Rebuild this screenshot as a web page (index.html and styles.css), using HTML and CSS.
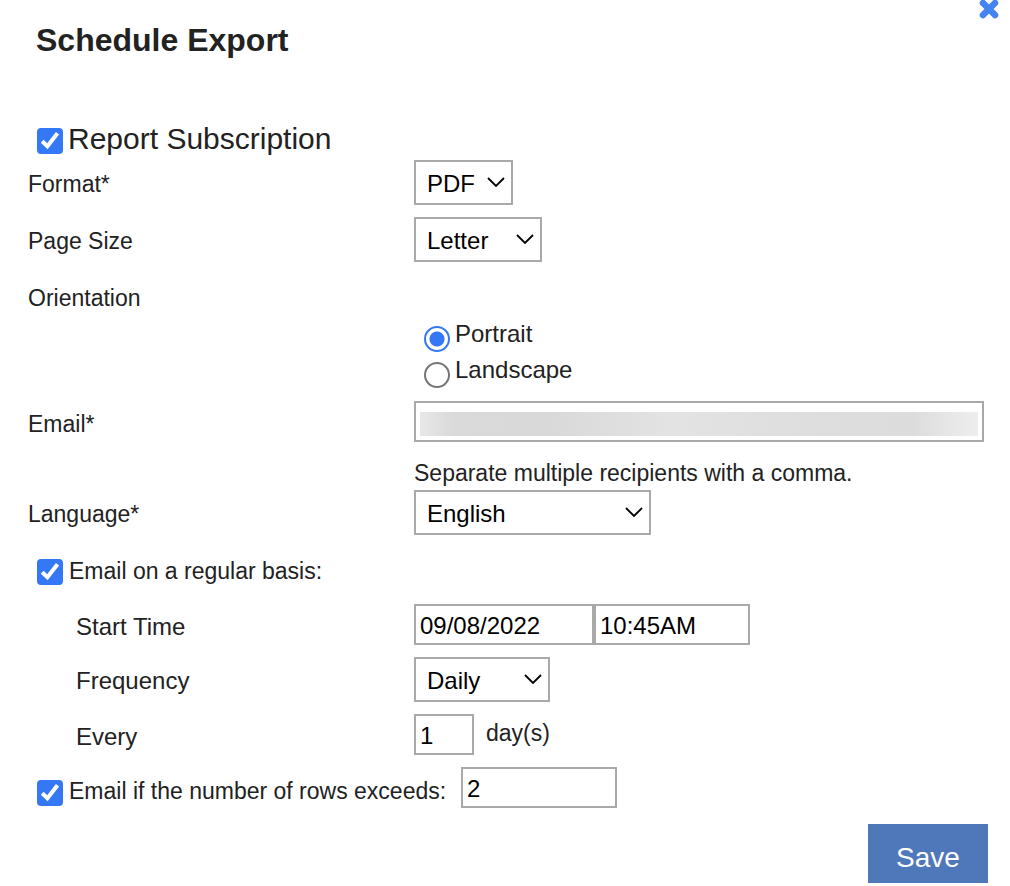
FILE: index.html
```html
<!DOCTYPE html>
<html lang="en">
<head>
<meta charset="utf-8">
<title>Schedule Export</title>
<link rel="stylesheet" href="styles.css">
</head>
<body>
<form class="dialog">
  <header class="header">
    <h1 class="title">Schedule Export</h1>
    <button class="close" type="button" aria-label="Close">
      <svg viewBox="0 1 20 20" width="20" height="20" aria-hidden="true"><path d="M4 4 16 16M16 4 4 16"/></svg>
    </button>
  </header>

  <div class="check-row check-row-large">
    <input class="check" type="checkbox" id="subscription" checked>
    <label for="subscription">Report Subscription</label>
  </div>

  <div class="rows">
    <div class="row">
      <label class="label" for="format">Format*</label>
      <select class="select select-format" id="format"><option>PDF</option></select>
    </div>
    <div class="row">
      <label class="label" for="size">Page Size</label>
      <select class="select select-size" id="size"><option>Letter</option></select>
    </div>
    <div class="row"><span class="label" id="orientation">Orientation</span></div>
  </div>

  <div class="radios" role="radiogroup" aria-labelledby="orientation">
    <div class="radio-row">
      <input class="radio" type="radio" name="orientation" id="portrait" checked>
      <label for="portrait">Portrait</label>
    </div>
    <div class="radio-row">
      <input class="radio" type="radio" name="orientation" id="landscape">
      <label for="landscape">Landscape</label>
    </div>
  </div>

  <div class="row row-field">
    <label class="label" for="email">Email*</label>
    <input class="field field-email" type="text" id="email" aria-describedby="hint">
  </div>
  <p class="hint" id="hint">Separate multiple recipients with a comma.</p>
  <div class="row">
    <label class="label" for="language">Language*</label>
    <select class="select select-language" id="language"><option>English</option></select>
  </div>

  <div class="check-row check-row-regular">
    <input class="check" type="checkbox" id="regular" checked>
    <label for="regular">Email on a regular basis:</label>
  </div>

  <div class="rows">
    <div class="row row-field row-nested">
      <label class="label" for="date">Start Time</label>
      <div class="pair">
        <input class="field field-date" type="text" id="date" value="09/08/2022">
        <input class="field field-time" type="text" aria-label="Time" value="10:45AM">
      </div>
    </div>
    <div class="row row-nested">
      <label class="label" for="frequency">Frequency</label>
      <select class="select select-frequency" id="frequency"><option>Daily</option></select>
    </div>
    <div class="row row-field row-nested">
      <label class="label" for="every">Every</label>
      <div class="pair pair-spaced">
        <input class="field field-every" type="text" id="every" value="1">
        <span class="unit">day(s)</span>
      </div>
    </div>
    <div class="check-row check-row-count">
      <input class="check" type="checkbox" id="exceeds" checked>
      <label for="exceeds">Email if the number of rows exceeds:</label>
      <input class="field field-count" type="text" aria-label="Number of rows" value="2">
    </div>
  </div>

  <footer class="footer"><button class="save" type="submit">Save</button></footer>
</form>
</body>
</html>
```

FILE: styles.css
```css
* { box-sizing: border-box; }
body {
  margin: 0;
  background: #fff;
  color: #222;
  font: 23px/28px "Liberation Sans", Arial, sans-serif;
}
.dialog { padding: 0 26px 3px 27px; }
.header {
  display: flex;
  justify-content: space-between;
  align-items: flex-start;
  height: 120px;
}
.title {
  margin: 0;
  padding: 20px 0 0 9px;
  font-size: 32px;
  line-height: 40px;
}
.close {
  margin-right: -15px;
  padding: 0;
  border: 0;
  background: none;
  line-height: 0;
}
.close path { fill: none; stroke: #4583f3; stroke-width: 6.6; stroke-linecap: round; }
.check-row {
  display: flex;
  align-items: center;
  gap: 6px;
  padding-left: 10px;
}
.check-row-large { height: 40px; gap: 5px; font-size: 30px; }
.check-row-large label { padding-bottom: 2px; }
.check-row-regular { height: 69px; padding-top: 2px; }
.check-row-count label { padding-top: 6px; }
.check {
  appearance: none;
  flex: none;
  width: 26px;
  height: 26px;
  margin: 2px 0 0;
  border-radius: 4px;
}
.check-row-count .check { margin-top: 10px; }
.check:checked {
  background: #3478f6 url("data:image/svg+xml,%3Csvg xmlns='http://www.w3.org/2000/svg' viewBox='0 0 26 26'%3E%3Cpath d='M5.2 13.3 10.4 18.3 20.5 5.3' fill='none' stroke='white' stroke-width='4'/%3E%3C/svg%3E");
}
.rows { display: flex; flex-direction: column; gap: 12px; }
.row {
  display: grid;
  grid-template-columns: 387px 1fr;
  align-items: center;
  min-height: 45px;
}
.row-field { min-height: 41px; }
.row-nested { padding-left: 48px; grid-template-columns: 339px 1fr; }
.label { padding: 2px 0 0 1px; }
.row-field .label { padding-top: 4px; }
.row-nested .label { font-size: 24px; }
.radios {
  display: grid;
  grid-auto-rows: 36px;
  padding: 0 0 10px 397px;
  font-size: 24px;
}
.radio-row { display: flex; gap: 5px; }
.radio-row label { padding-top: 1px; }
.radio {
  appearance: none;
  width: 26px;
  height: 26px;
  margin: 7px 0 0;
  border: 2px solid #757575;
  border-radius: 50%;
}
.radio:checked {
  border-color: #3478f6;
  background: radial-gradient(circle, #3478f6 0 7px, transparent 8px);
}
.select, .field {
  border: 2px solid #a9a9a9;
  border-radius: 0;
  background-color: #fff;
  color: #000;
  font: 24px/28px "Liberation Sans", Arial, sans-serif;
}
.select {
  appearance: none;
  height: 45px;
  padding: 2px 10px 0 11px;
  background-image: url("data:image/svg+xml,%3Csvg xmlns='http://www.w3.org/2000/svg' viewBox='0 0 18 10'%3E%3Cpath d='M1 1 9 9 17 1' fill='none' stroke='black' stroke-width='1.8'/%3E%3C/svg%3E");
  background-repeat: no-repeat;
  background-size: 18px 10px;
  background-position: right 6px top 15px;
}
.select-format { width: 99px; }
.select-size { width: 128px; }
.select-language { width: 237px; }
.select-frequency { width: 136px; }
.field { height: 41px; padding: 2px 4px 0; min-width: 0; }
.field-email {
  width: 100%;
  background-image: linear-gradient(90deg, #e8e8e8, #dadada 6%, #d9d9d9 23%, #e3e3e3 45%, #dedede 70%, #dcdcdc 88%, #eee);
  background-repeat: no-repeat;
  background-origin: content-box;
  background-size: 100% 24px;
  background-position: 0 7px;
}
.field-date { width: 180px; }
.field-time { width: 156px; }
.field-every { width: 60px; }
.field-count { width: 156px; margin-left: 9px; }
.pair { display: flex; align-items: center; }
.pair-spaced { gap: 12px; }
.unit { padding-bottom: 3px; }
.hint { margin: 0; padding: 17px 0 3px 387px; }
.footer { display: flex; justify-content: flex-end; padding-top: 16px; margin-right: -4px; }
.save {
  width: 120px;
  height: 59px;
  padding: 8px 0 0;
  border: 0;
  background: #4f78ba;
  color: #fff;
  font: 28px/32px "Liberation Sans", Arial, sans-serif;
}
```
